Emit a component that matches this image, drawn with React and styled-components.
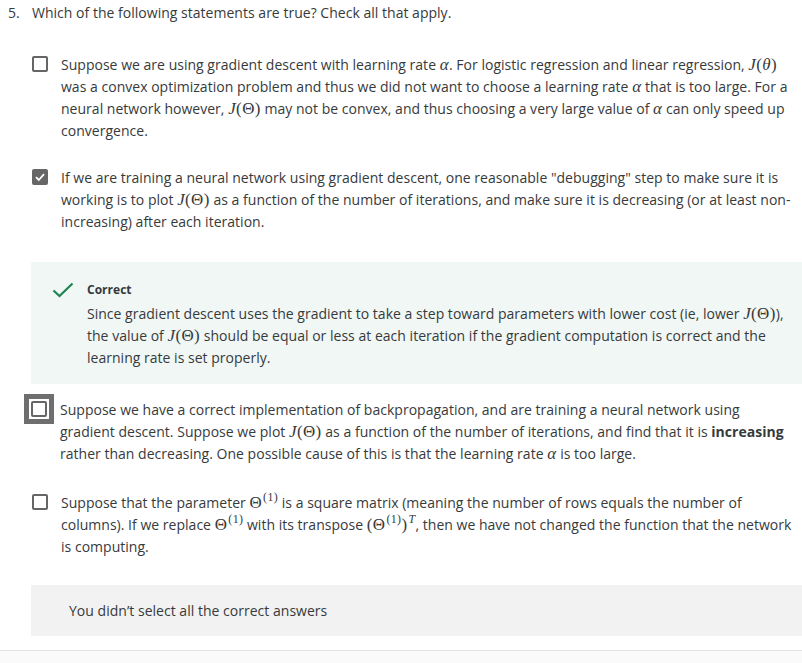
import React from "react";
import styled, { createGlobalStyle } from "styled-components";

const GlobalStyle = createGlobalStyle`
  body {
    margin: 0;
    background: #ffffff;
    font-family: "Open Sans", "Noto Sans", sans-serif;
    font-size: 14px;
    letter-spacing: 0.02px;
    color: #373a3c;
  }
`;

function Tex({ children }) {
  return <MathText>{children}</MathText>;
}

const J = () => <I>J</I>;
const JTheta = () => (
  <Tex>
    <J />(Θ)
  </Tex>
);
const Alpha = () => (
  <Tex>
    <I>α</I>
  </Tex>
);
const Theta1 = () => (
  <>
    Θ<Sup>(1)</Sup>
  </>
);

function Checkbox({ checked, focused }) {
  const box = (
    <Box $checked={checked}>
      {checked && (
        <svg width="12" height="12" viewBox="0 0 12 12">
          <path d="M2 6.2 L4.8 9 L10 3.2" fill="none" stroke="#fff" strokeWidth="1.8" />
        </svg>
      )}
    </Box>
  );
  return focused ? <FocusRing>{box}</FocusRing> : <BoxSlot>{box}</BoxSlot>;
}

function Option({ checked, focused, children, $gap }) {
  return (
    <OptionRow $gap={$gap}>
      <Checkbox checked={checked} focused={focused} />
      <OptionText>{children}</OptionText>
    </OptionRow>
  );
}

export default function App() {
  return (
    <Page>
      <GlobalStyle />
      <Question>
        <Number>5.</Number>
        <span>Which of the following statements are true? Check all that apply.</span>
      </Question>

      <Options>
        <Option $gap={25}>
          Suppose we are using gradient descent with learning rate <Alpha />. For logistic regression and linear
          regression, <Tex><J />(<I>θ</I>)</Tex> was a convex optimization problem and thus we did not want to choose a
          learning rate <Alpha /> that is too large. For a neural network however, <JTheta /> may not be convex, and thus
          choosing a very large value of <Alpha /> can only speed up convergence.
        </Option>

        <Option checked $gap={29}>
          If we are training a neural network using gradient descent, one reasonable "debugging" step to make sure it is
          working is to plot <JTheta /> as a function of the number of iterations, and make sure it is decreasing (or at
          least non-increasing) after each iteration.
        </Option>

        <CorrectBox>
          <svg width="22" height="16" viewBox="0 0 22 16">
            <path d="M1.5 8.5 L7.5 14 L20.5 1.5" fill="none" stroke="#1f8354" strokeWidth="2.2" />
          </svg>
          <div>
            <CorrectLabel>Correct</CorrectLabel>
            <Explanation>
              Since gradient descent uses the gradient to take a step toward parameters with lower cost (ie, lower{" "}
              <JTheta />), the value of <JTheta /> should be equal or less at each iteration if the gradient computation
              is correct and the learning rate is set properly.
            </Explanation>
          </div>
        </CorrectBox>

        <Option focused $gap={27}>
          Suppose we have a correct implementation of backpropagation, and are training a neural network using gradient
          descent. Suppose we plot <JTheta /> as a function of the number of iterations, and find that it is{" "}
          <b>increasing</b> rather than decreasing. One possible cause of this is that the learning rate <Alpha /> is
          too large.
        </Option>

        <Option $gap={27}>
          Suppose that the parameter <Tex><Theta1 /></Tex> is a square matrix (meaning the number of rows equals the
          number of columns). If we replace <Tex><Theta1 /></Tex> with its transpose{" "}
          <Tex>
            (<Theta1 />)<Sup><I>T</I></Sup>
          </Tex>
          , then we have not changed the function that the network is computing.
        </Option>

        <ResultBox>You didn’t select all the correct answers</ResultBox>
      </Options>

      <Footer />
    </Page>
  );
}

const Page = styled.div`
  width: 802px;
  min-height: 663px;
  display: flex;
  flex-direction: column;
`;

const Question = styled.div`
  display: flex;
  padding: 2px 0 0 8px;
  line-height: 22px;
`;

const Number = styled.span`
  width: 24px;
  flex-shrink: 0;
`;

const Options = styled.div`
  padding: 30px 0 0 32px;
  display: flex;
  flex-direction: column;
`;

const OptionRow = styled.div`
  display: flex;
  gap: 13px;
  margin-bottom: ${(p) => p.$gap || 0}px;
  padding-right: 6px;
`;

const BoxSlot = styled.div`
  flex-shrink: 0;
  padding-top: 2px;
`;

const FocusRing = styled.div`
  flex-shrink: 0;
  margin: -5px -7px 0 -8px;
  align-self: flex-start;
  padding: 2px;
  border: 5px solid #6e6e6e;
  background: #fff;
  display: flex;
`;

const Box = styled.span`
  box-sizing: border-box;
  width: 16px;
  height: 16px;
  display: flex;
  align-items: center;
  justify-content: center;
  border: 2px solid #666666;
  border-radius: 2px;
  background: ${(p) => (p.$checked ? "#666666" : "#fff")};
`;

const OptionText = styled.div`
  line-height: 22px;
`;

const MathText = styled.span`
  font-family: "Liberation Serif", "DejaVu Serif", serif;
  font-size: 1.21em;
  letter-spacing: 0.4px;
  line-height: 1;
`;

const I = styled.i`
  font-style: italic;
`;

const Sup = styled.sup`
  font-size: 0.7em;
  line-height: 0;
  margin-left: 1px;
  vertical-align: 0.6em;
`;

const CorrectBox = styled.div`
  margin-left: -1px;
  margin-bottom: 15px;
  background: #f0f7f5;
  display: flex;
  gap: 13px;
  padding: 18px 14px 15px 21px;

  svg {
    flex-shrink: 0;
    margin-top: 2px;
  }
`;

const CorrectLabel = styled.div`
  font-size: 12px;
  font-weight: 700;
  line-height: 20px;
`;

const Explanation = styled.div`
  margin-top: 3px;
  line-height: 22px;
`;

const ResultBox = styled.div`
  margin-left: -1px;
  background: #f2f2f2;
  height: 51px;
  display: flex;
  align-items: center;
  padding-left: 38px;
`;

const Footer = styled.div`
  margin-top: 14px;
  flex: 1;
  border-top: 1px solid #e4e4e4;
  background: #fafafa;
`;
